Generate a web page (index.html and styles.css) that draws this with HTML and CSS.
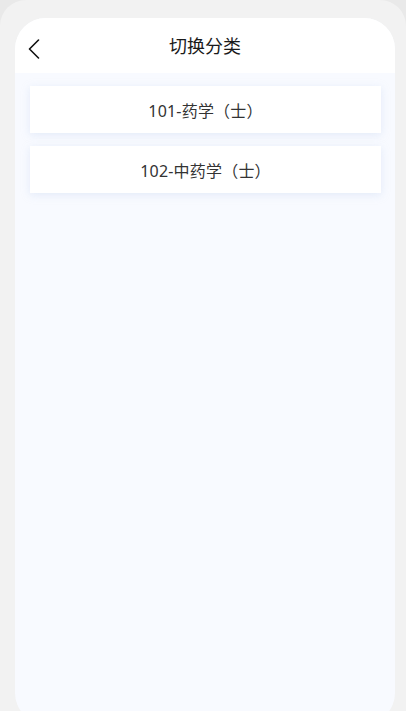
FILE: index.html
```html
<!DOCTYPE html>
<html lang="zh">
<head>
<meta charset="utf-8">
<title>切换分类</title>
<link rel="stylesheet" href="styles.css">
</head>
<body>
<div class="screen">
  <div class="card">
    <header class="header">
      <svg class="back" width="12" height="20" viewBox="0 0 12 20" aria-hidden="true">
        <path d="M10.5 1 L1.5 10 L10.5 19" fill="none" stroke="#111" stroke-width="1.6" stroke-linecap="round" stroke-linejoin="round"/>
      </svg>
      <h1 class="title">切换分类</h1>
    </header>
    <main class="list">
      <div class="item">101-药学（士）</div>
      <div class="item">102-中药学（士）</div>
    </main>
  </div>
</div>
</body>
</html>
```
FILE: styles.css
```css
html, body {
  margin: 0;
  padding: 0;
  width: 406px;
  height: 711px;
  overflow: hidden;
  background: #e9e9e9;
  font-family: "Noto Sans", "Noto Sans CJK SC", sans-serif;
}

.screen {
  width: 406px;
  height: 740px;
  background: #f2f2f2;
  border-radius: 26px;
  padding-top: 18px;
  box-sizing: border-box;
}

.card {
  margin-left: 15px;
  width: 380px;
  height: 706px;
  background: #f8faff;
  border-radius: 31px;
  overflow: hidden;
  display: flex;
  flex-direction: column;
}

.header {
  height: 55px;
  flex: none;
  background: #fff;
  display: flex;
  align-items: center;
  justify-content: center;
  position: relative;
}

.back {
  position: absolute;
  left: 13px;
  top: 21px;
}

.title {
  margin: 0;
  font-size: 18px;
  font-weight: 400;
  color: #1a1a1a;
  line-height: 1;
  padding-top: 1px;
}

.list {
  padding: 13px 14px 0 15px;
  display: flex;
  flex-direction: column;
  gap: 13px;
}

.item {
  height: 47px;
  background: #fff;
  display: flex;
  align-items: center;
  justify-content: center;
  font-size: 16px;
  letter-spacing: 0.2px;
  color: #333;
  box-shadow: 0 2px 8px rgba(190, 205, 235, 0.35);
}
```
